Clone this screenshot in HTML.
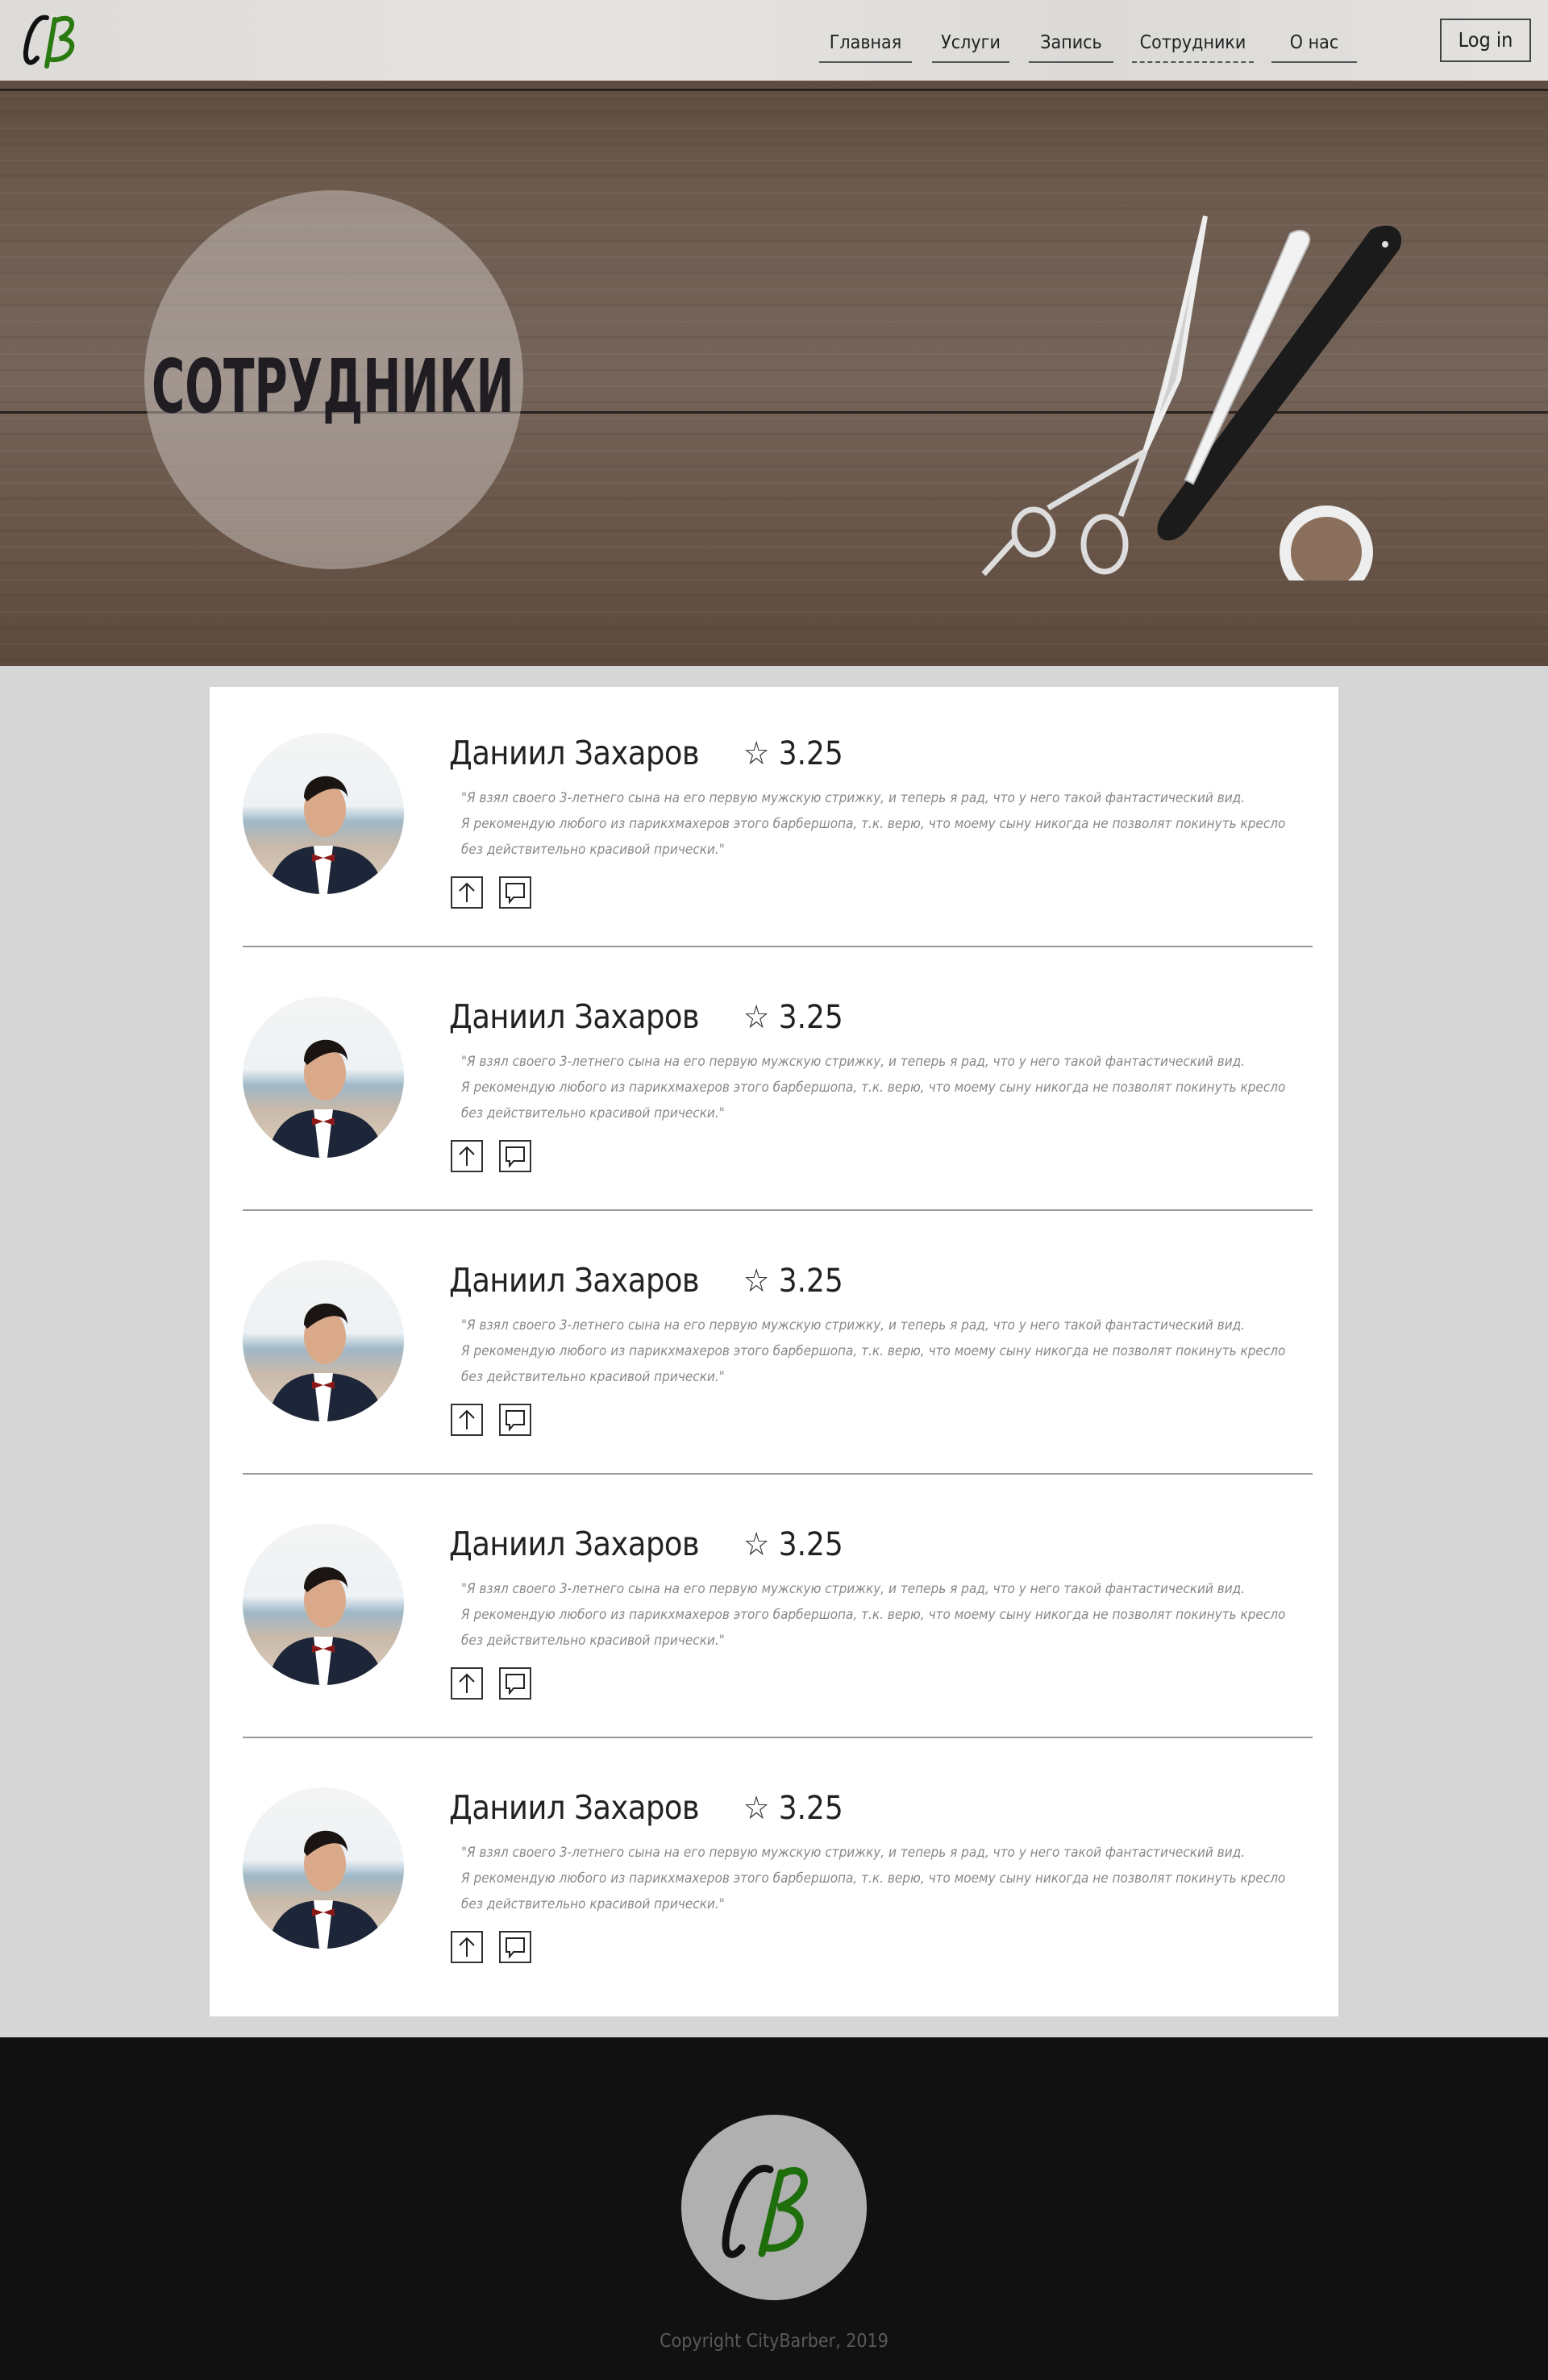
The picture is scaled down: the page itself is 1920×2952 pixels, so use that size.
<!DOCTYPE html>
<html><head><meta charset="utf-8"><style>
*{margin:0;padding:0;box-sizing:border-box}
body{width:1920px;height:2952px;background:#d6d6d6;font-family:"Liberation Sans","DejaVu Sans",sans-serif;position:relative;overflow:hidden}
.hdr{position:absolute;left:0;top:0;width:1920px;height:100px;background:linear-gradient(90deg,#dddbd8,#e6e4e1 40%,#dcdad7 70%,#e4e2df);}
.nav a{position:absolute;top:40px;font-size:23px;color:#222;text-decoration:none;text-align:center;height:38px;border-bottom:2px solid #555;font-family:"DejaVu Sans Condensed","Liberation Sans Narrow","Liberation Sans",sans-serif}
.login{position:absolute;left:1786px;top:23px;width:113px;height:54px;border:2px solid #444;font-size:25px;color:#222;text-align:center;line-height:50px;font-family:"DejaVu Sans Condensed","Liberation Sans",sans-serif}
.hero{position:absolute;left:0;top:100px;width:1920px;height:726px;overflow:hidden;
background:
repeating-linear-gradient(180deg,rgba(0,0,0,0) 0 18px,rgba(255,255,255,.04) 18px 20px,rgba(0,0,0,0) 20px 37px,rgba(0,0,0,.06) 37px 40px),
linear-gradient(180deg,#5e4c40 0%,#6d5b4e 20%,#75645a 50%,#6a574a 75%,#5d4a3e 100%);}
.plank{position:absolute;left:0;width:1920px;height:3px;background:#2a211c}
.circ{position:absolute;left:179px;top:136px;width:470px;height:470px;border-radius:50%;background:rgba(225,220,218,.42)}
.title{position:absolute;left:188px;top:326px;font-size:92px;font-weight:bold;color:#1f1d22;font-family:"Liberation Sans Narrow","DejaVu Sans Condensed",sans-serif;transform:scaleX(.68);transform-origin:left;white-space:nowrap}
.card{position:absolute;left:260px;top:852px;width:1400px;height:1649px;background:#fff}
.row{position:absolute;left:0;width:1400px;height:327px}
.av{position:absolute;left:41px;top:57px;width:200px;height:200px;border-radius:50%;overflow:hidden;background:linear-gradient(180deg,#f4f4f4 0,#eef2f5 45%,#9fb8c8 55%,#c8b9aa 70%,#e0d0c0 100%)}
.name{position:absolute;left:297px;top:58px;font-size:41px;color:#222;font-family:"DejaVu Sans Condensed","Liberation Sans Narrow",sans-serif;letter-spacing:-.5px}
.rate{position:absolute;left:662px;top:60px;font-size:40px;color:#222;font-family:"DejaVu Sans Condensed",sans-serif}
.q{position:absolute;left:312px;top:122px;font-size:17px;line-height:32px;color:#888;font-style:italic;font-family:"DejaVu Sans Condensed","Liberation Sans",sans-serif;width:1090px;white-space:nowrap}
.ib{position:absolute;top:235px;width:40px;height:40px;border:2px solid #333}
.div{position:absolute;left:41px;top:321px;width:1327px;height:2px;background:#999}
.foot{position:absolute;left:0;top:2527px;width:1920px;height:425px;background:#111}
.flogo{position:absolute;left:845px;top:96px;width:230px;height:230px;border-radius:50%;background:#b0b0b0}
.copy{position:absolute;left:0;top:364px;width:1920px;text-align:center;color:#5a5a5a;font-size:23px;font-family:"DejaVu Sans Condensed","Liberation Sans",sans-serif}
</style></head><body>
<div class="hdr">
<svg style="position:absolute;left:24px;top:14px" width="96" height="72" viewBox="0 0 96 72"><path d="M34 8 C20 4 10 30 8 50 C7 64 14 68 22 58" fill="none" stroke="#111" stroke-width="6" stroke-linecap="round"/><path d="M44 10 L34 68 M44 12 C70 0 72 24 50 34 C76 32 66 62 40 60" fill="none" stroke="#2a7a12" stroke-width="6" stroke-linecap="round"/></svg>
<div class="nav">
<a style="left:1016px;width:115px">Главная</a>
<a style="left:1156px;width:96px">Услуги</a>
<a style="left:1276px;width:105px">Запись</a>
<a style="left:1404px;width:151px;border-bottom:2px dashed #555">Сотрудники</a>
<a style="left:1577px;width:106px">О нас</a>
</div>
<div class="login">Log in</div>
</div>
<div class="hero">
<div class="plank" style="top:10px"></div>
<div class="plank" style="top:410px"></div>
<div class="circ"></div>
<div class="title">СОТРУДНИКИ</div>
<svg style="position:absolute;left:1180px;top:160px" width="600" height="460" viewBox="1180 260 600 460">
<path d="M1700 285 C1730 270 1745 290 1735 310 L1470 660 C1450 680 1425 670 1440 640 Z" fill="#1b1b1b"/>
<circle cx="1718" cy="303" r="4" fill="#ddd"/>
<path d="M1600 290 C1615 280 1630 290 1622 305 L1480 600 L1470 595 Z" fill="#f2f2f2" stroke="#bbb" stroke-width="2"/>
<path d="M1495 268 L1445 480 L1420 560 M1495 268 L1462 470 L1420 560" fill="#d0d0d0" stroke="#eee" stroke-width="6"/>
<ellipse cx="1282" cy="660" rx="24" ry="28" fill="none" stroke="#ddd" stroke-width="7"/>
<ellipse cx="1370" cy="675" rx="26" ry="34" fill="none" stroke="#ddd" stroke-width="7"/>
<path d="M1420 560 L1300 630 M1420 560 L1390 640 M1258 670 L1220 712" stroke="#ddd" stroke-width="7" fill="none"/>
<circle cx="1645" cy="685" r="58" fill="#eee"/><circle cx="1645" cy="685" r="44" fill="#8a6f5c"/>
</svg>
</div>
<div class="card">
<div class="row" style="top:0">
<div class="av"><svg width="200" height="200"><path d="M30 200 C40 150 70 140 100 140 C130 140 170 150 175 200Z" fill="#1c2638"/><path d="M88 140 L112 140 L105 200 L95 200Z" fill="#fff"/><path d="M86 150 L114 160 L114 150 L86 160Z" fill="#8a1818"/><ellipse cx="102" cy="95" rx="26" ry="34" fill="#d9a98a"/><path d="M76 80 C76 45 130 45 130 80 C128 70 110 60 80 85Z" fill="#1a1512"/></svg></div>
<div class="name">Даниил Захаров</div><div class="rate">☆ 3.25</div>
<div class="q">"Я взял своего 3-летнего сына на его первую мужскую стрижку, и теперь я рад, что у него такой фантастический вид.<br>Я рекомендую любого из парикхмахеров этого барбершопа, т.к. верю, что моему сыну никогда не позволят покинуть кресло<br>без действительно красивой прически."</div>
<div class="ib" style="left:299px"><svg width="36" height="36"><path d="M18 30 V7 M9 16 L18 7 L27 16" stroke="#222" stroke-width="2" fill="none"/></svg></div>
<div class="ib" style="left:359px"><svg width="36" height="36"><path d="M7 7 H29 V24 H16 L11 30 V24 H7 Z" stroke="#222" stroke-width="2" fill="none"/></svg></div>
<div class="div"></div></div>
</div>
<div class="foot"><div class="flogo"><svg width="230" height="230" viewBox="0 0 230 230"><path d="M110 68 C80 55 55 130 55 160 C55 175 65 178 75 165" fill="none" stroke="#111" stroke-width="9" stroke-linecap="round"/><path d="M124 72 L100 172 M124 74 C160 55 165 100 120 115 C165 115 150 170 105 165" fill="none" stroke="#1e6e0c" stroke-width="9" stroke-linecap="round"/></svg></div>
<div class="copy">Copyright CityBarber, 2019</div></div>
<script>
var c=document.querySelector('.card'),r=c.querySelector('.row');
for(var i=1;i<5;i++){var n=r.cloneNode(true);n.style.top=(i*327)+'px';if(i==4)n.querySelector('.div').remove();c.appendChild(n);}
</script>
</body></html>
